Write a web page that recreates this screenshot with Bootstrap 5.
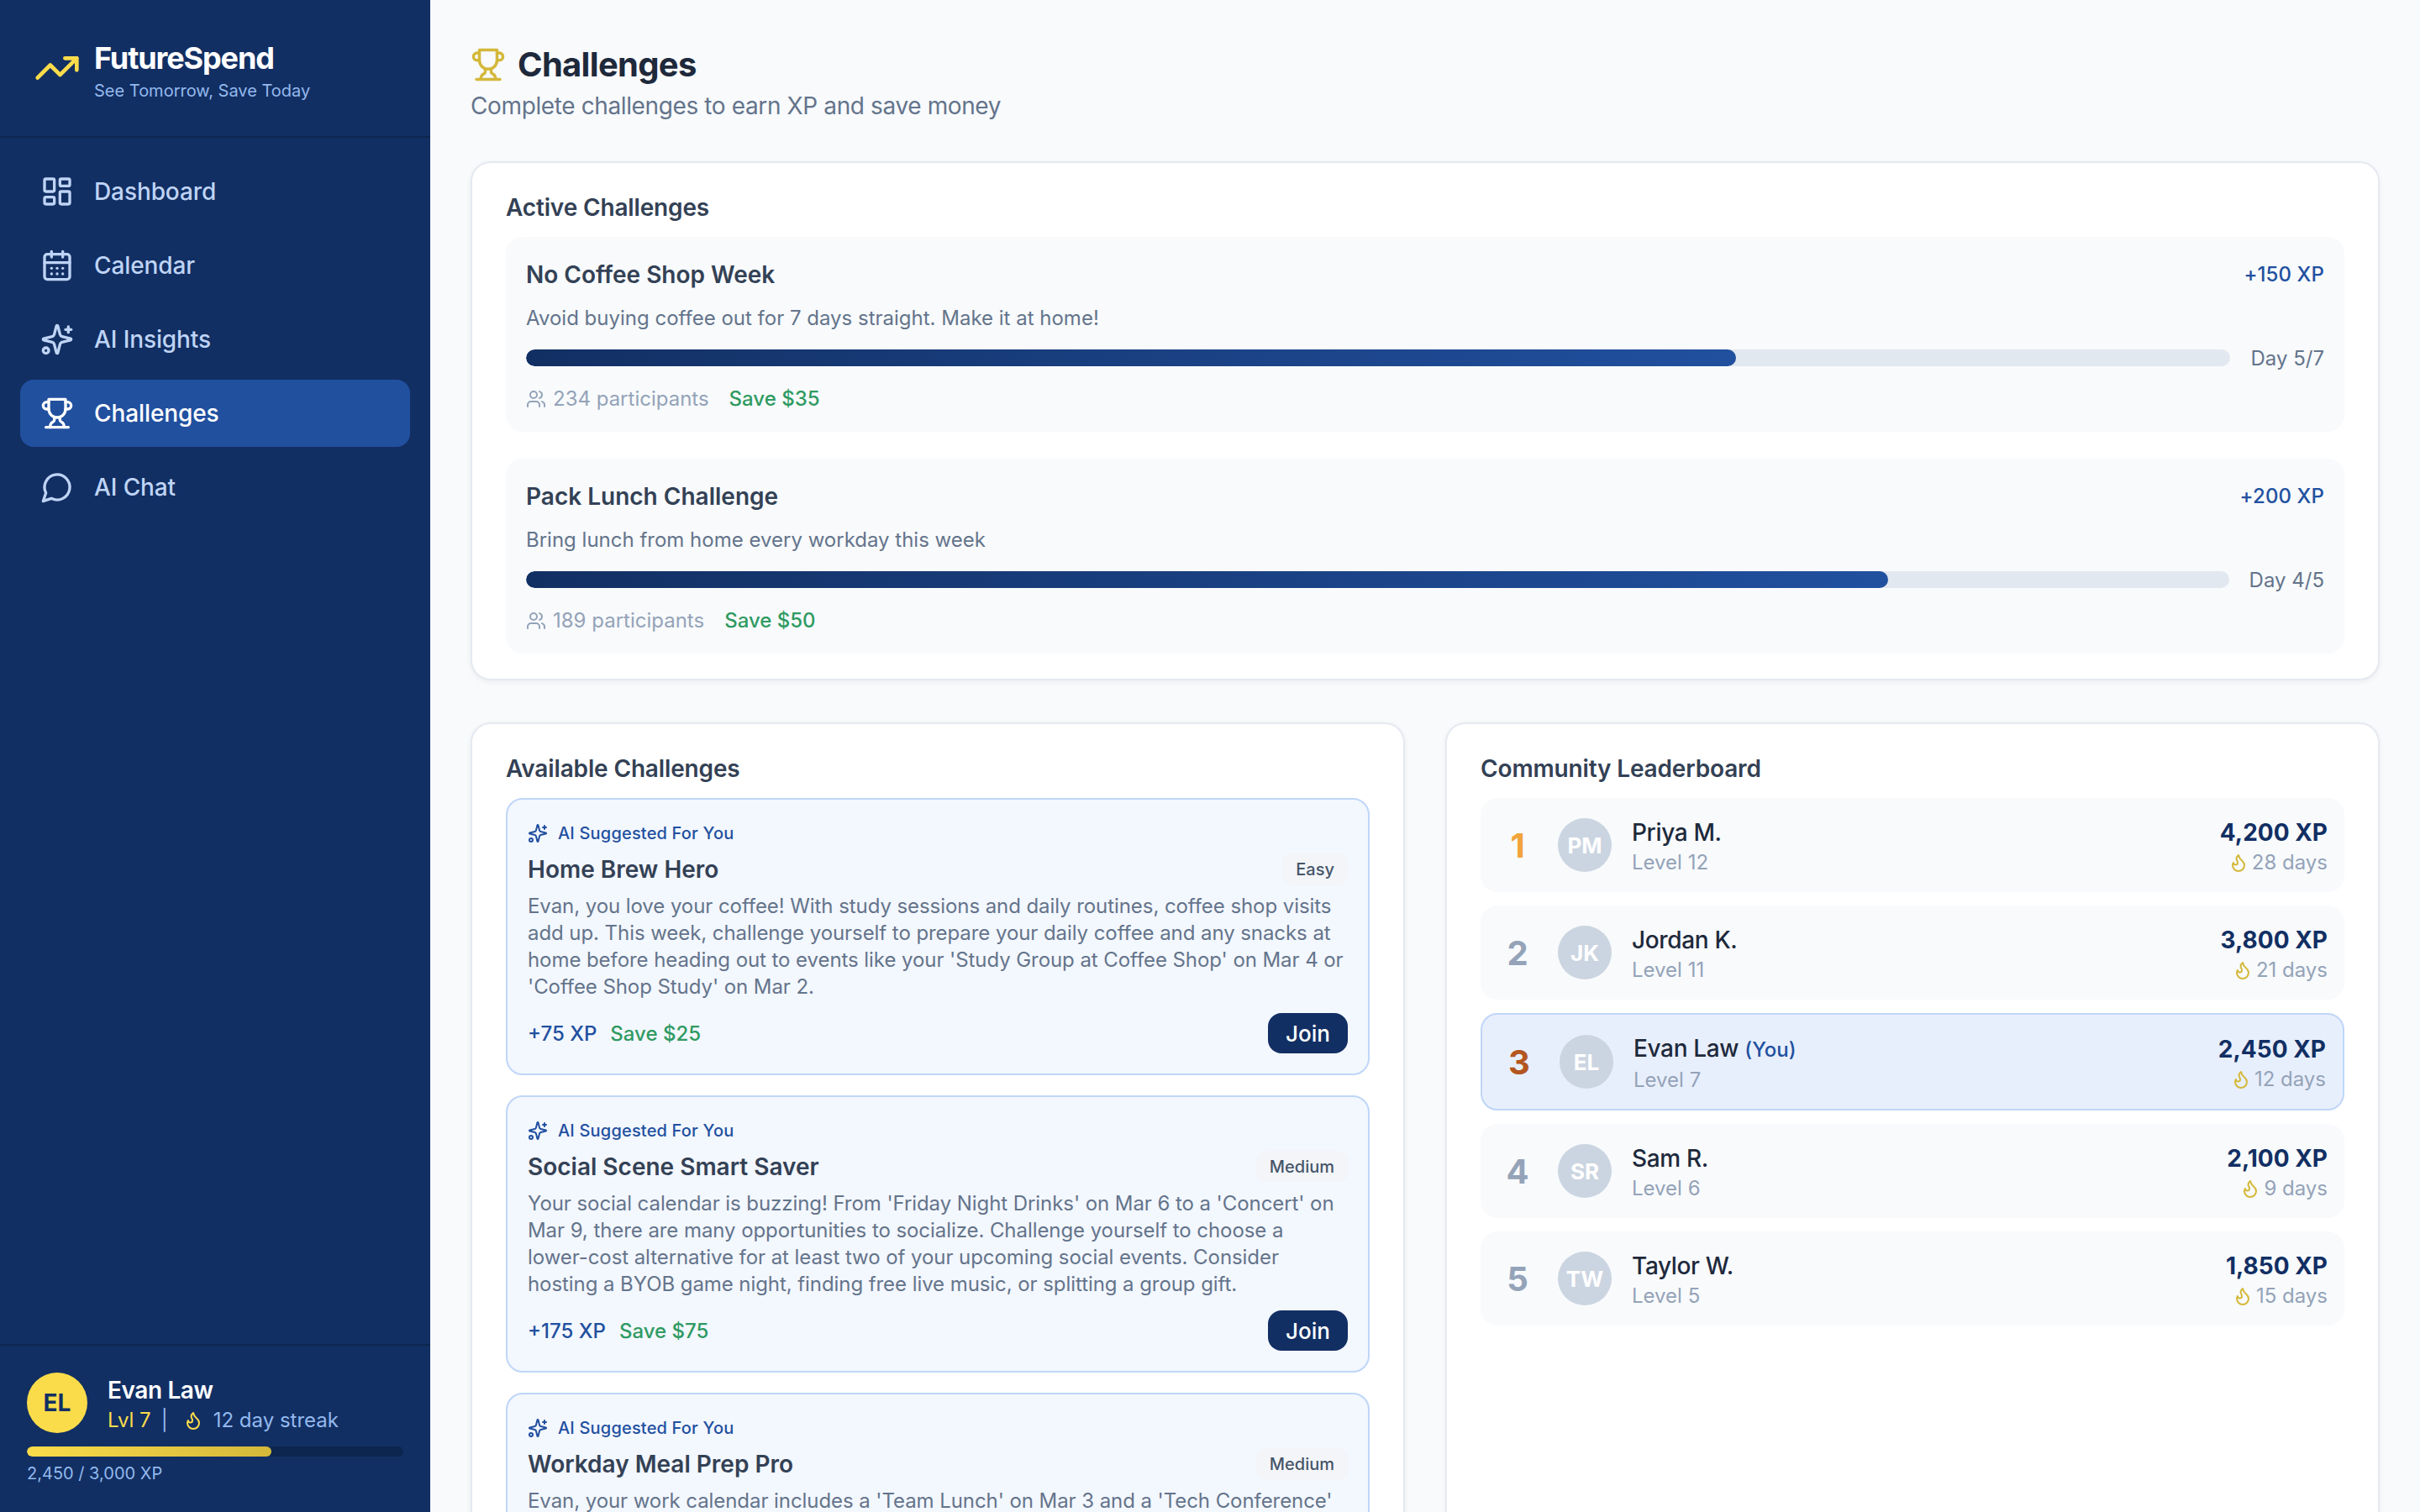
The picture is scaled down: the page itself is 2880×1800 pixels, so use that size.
<!DOCTYPE html>
<html lang="en">
<head>
<meta charset="utf-8">
<title>FutureSpend – Challenges</title>
<link rel="stylesheet" href="https://cdn.jsdelivr.net/npm/bootstrap@5.3.0/dist/css/bootstrap.min.css">
<style>
html,body{height:100%;}
body{font-family:Inter,"Liberation Sans",sans-serif;background:#f8fafc;color:#1e293b;overflow:hidden;}
.fs-app{height:1800px;}
svg.ic{fill:none;stroke:currentColor;stroke-width:2;stroke-linecap:round;stroke-linejoin:round;flex:none;display:block;}
.fs-side{width:512px;flex:none;background:#122f63;color:#bfd4f5;}
.fs-head{height:164px;border-bottom:2px solid #0e274f;padding:0 40px;gap:16px;}
.fs-logo{width:56px;height:56px;color:#fadc4b;}
.fs-headtxt{padding-top:9px;}
.fs-brand{font-size:36px;line-height:40px;font-weight:700;color:#fff;letter-spacing:-1.1px;}
.fs-tag{font-size:20px;line-height:28px;color:#93b9ee;margin-top:5px;}
.fs-nav{padding:24px;gap:8px;}
.fs-nav .nav-link{height:80px;padding:0 24px;gap:24px;border-radius:16px;color:#bfd4f5;font-size:28px;font-weight:500;letter-spacing:-.1px;}
.fs-nav .nav-link.active{background:#21509f;color:#fff;}
.fs-nav svg{width:40px;height:40px;}
.fs-user{border-top:2px solid #0e274f;padding:32px;height:200px;}
.fs-av{width:72px;height:72px;border-radius:50%;background:#fadc4b;color:#122f63;font-size:28px;font-weight:700;flex:none;}
.fs-utxt{padding-top:2px;}
.fs-uname{font-size:28px;line-height:38px;font-weight:600;color:#fff;letter-spacing:-.4px;}
.fs-usub{font-size:24px;line-height:34px;color:#93b9ee;gap:16px;}
.fs-lvl{color:#fadc4b;margin-right:-4px;}
.fs-pipe{margin-right:2px;}
.fs-usub svg{width:24px;height:24px;color:#fadc4b;margin-right:-4px;}
.fs-xpbar{height:12px;border-radius:6px;background:#0c2650;margin-top:14px;}
.fs-xpfill{background:linear-gradient(90deg,#fadc4b,#d4b83a);border-radius:6px;}
.fs-xptxt{font-size:20px;line-height:28px;color:#93b9ee;margin-top:6px;}
.fs-main{padding:48px;min-width:0;}
.fs-title{font-size:40px;line-height:58px;font-weight:700;color:#1e293b;gap:14px;letter-spacing:-.7px;margin-bottom:0;}
.fs-title svg{width:42px;height:42px;color:#d4b83a;}
.fs-sub{font-size:28px;line-height:40px;color:#64748b;margin:0 0 46px;letter-spacing:-.38px;}
.fs-card{background:#fff;border:2px solid #e5e9f0;border-radius:24px;box-shadow:0 2px 6px rgba(15,23,42,.06);padding:32px 40px 30px;}
.fs-h{font-size:28px;height:40px;line-height:42px;font-weight:600;color:#334155;margin:0 0 16px;letter-spacing:-.15px;}
.fs-active{background:#f8fafc;border-radius:20px;padding:24px;margin-bottom:32px;}
.fs-active:last-child{margin-bottom:0;}
.fs-atitle{font-size:28px;height:40px;line-height:42px;font-weight:600;color:#334155;}
.fs-xp{font-size:24px;color:#21509f;font-weight:500;letter-spacing:.1px;padding-top:2px;}
.fs-desc{font-size:24px;line-height:32px;color:#64748b;margin:17px 0 -1px;}
.fs-pbar{height:20px;border-radius:10px;background:#e2e8f0;}
.fs-pfill{background:linear-gradient(90deg,#122f63,#21509f);border-radius:10px;}
.fs-day{font-size:24px;height:32px;line-height:34px;color:#64748b;}
.fs-barrow{gap:24px;margin-top:16px;}
.fs-meta{font-size:24px;height:31px;line-height:32px;color:#94a3b8;gap:24px;margin-top:17px;}
.fs-meta svg{width:24px;height:24px;}
.fs-save{color:#2f9a62;font-weight:500;}
.fs-pair{--bs-gutter-x:48px;margin-top:50px;}
.fs-sug{background:#f3f7fe;border:2px solid #bfd6f8;border-radius:20px;padding:24px;margin-bottom:24px;}
.fs-ailabel{font-size:20px;line-height:32px;font-weight:500;color:#21509f;gap:12px;letter-spacing:.18px;}
.fs-ailabel svg{width:24px;height:24px;}
.fs-srow{margin-top:8px;height:38px;}
.fs-stitle{font-size:28px;line-height:38px;font-weight:600;color:#334155;}
.fs-diff{font-size:20px;line-height:26px;padding:6px 16px;background:#f3f5f9;color:#475569;font-weight:500;border-radius:12px;}
.fs-sdesc{font-size:24px;line-height:32px;color:#64748b;margin:9px 0 15px;letter-spacing:-.07px;}
.fs-join{background:#122f63;color:#fff;border:0;font-size:26px;font-weight:500;height:48px;width:95px;padding:0;border-radius:16px;}
.fs-join:hover{background:#122f63;color:#fff;}
.fs-sxp{font-size:24px;color:#21509f;font-weight:500;padding-top:2px;}
.fs-lrow{background:#f8fafc;border-radius:20px;padding:0 20px;height:112px;margin-bottom:16px;gap:24px;}
.fs-lrow.me{background:#e8effc;border:2px solid #bfd6f8;height:116px;}
.fs-rank{width:48px;font-size:40px;font-weight:700;color:#94a3b8;text-align:center;flex:none;padding-top:2px;}
.fs-rank1{color:#f2a33a;}
.fs-rank3{color:#b4561f;}
.fs-lav{width:64px;height:64px;border-radius:50%;background:#cbd5e1;color:#fff;font-size:26px;font-weight:700;flex:none;}
.fs-ltxt{padding-top:4px;}
.fs-lname{font-size:28px;line-height:38px;font-weight:500;color:#1e293b;letter-spacing:-.35px;}
.fs-lname span{font-size:24px;color:#21509f;letter-spacing:0;}
.fs-llvl{font-size:24px;line-height:34px;color:#94a3b8;}
.fs-lxp{font-size:28px;line-height:38px;font-weight:700;color:#122f63;}
.fs-ldays{font-size:24px;line-height:34px;color:#94a3b8;gap:4px;}
.fs-ldays svg{width:24px;height:24px;color:#d4b83a;}
</style>
</head>
<body>
<svg width="0" height="0" class="position-absolute">
<defs>
<symbol id="i-trend" viewBox="0 0 24 24"><polyline points="22 7 13.5 15.5 8.5 10.5 2 17"/><polyline points="16 7 22 7 22 13"/></symbol>
<symbol id="i-dash" viewBox="0 0 24 24"><rect x="3" y="3" width="7" height="9" rx="1"/><rect x="14" y="3" width="7" height="5" rx="1"/><rect x="14" y="12" width="7" height="9" rx="1"/><rect x="3" y="16" width="7" height="5" rx="1"/></symbol>
<symbol id="i-cal" viewBox="0 0 24 24"><path d="M8 2v4"/><path d="M16 2v4"/><rect x="3" y="4" width="18" height="18" rx="2"/><path d="M3 10h18"/><path d="M8 14h.01"/><path d="M12 14h.01"/><path d="M16 14h.01"/><path d="M8 18h.01"/><path d="M12 18h.01"/><path d="M16 18h.01"/></symbol>
<symbol id="i-spark" viewBox="0 0 24 24"><path d="M9.937 15.5A2 2 0 0 0 8.5 14.063l-6.135-1.582a.5.5 0 0 1 0-.962L8.5 9.936A2 2 0 0 0 9.937 8.5l1.582-6.135a.5.5 0 0 1 .963 0L14.063 8.5A2 2 0 0 0 15.5 9.937l6.135 1.581a.5.5 0 0 1 0 .964L15.5 14.063a2 2 0 0 0-1.437 1.437l-1.582 6.135a.5.5 0 0 1-.963 0z"/><path d="M20 3v4"/><path d="M22 5h-4"/><circle cx="4" cy="20" r="2"/></symbol>
<symbol id="i-trophy" viewBox="0 0 24 24"><path d="M6 9H4.5a2.5 2.5 0 0 1 0-5H6"/><path d="M18 9h1.5a2.5 2.5 0 0 0 0-5H18"/><path d="M4 22h16"/><path d="M10 14.66V17c0 .55-.47.98-.97 1.21C7.85 18.75 7 20.24 7 22"/><path d="M14 14.66V17c0 .55.47.98.97 1.21C16.15 18.75 17 20.24 17 22"/><path d="M18 2H6v7a6 6 0 0 0 12 0V2Z"/></symbol>
<symbol id="i-chat" viewBox="0 0 24 24"><path d="M7.9 20A9 9 0 1 0 4 16.1L2 22Z"/></symbol>
<symbol id="i-flame" viewBox="0 0 24 24"><path d="M8.5 14.5A2.5 2.5 0 0 0 11 12c0-1.38-.5-2-1-3-1.072-2.143-.224-4.054 2-6 .5 2.5 2 4.9 4 6.5 2 1.6 3 3.5 3 5.5a7 7 0 1 1-14 0c0-1.153.433-2.294 1-3a2.5 2.5 0 0 0 2.5 2.5z"/></symbol>
<symbol id="i-users" viewBox="0 0 24 24"><path d="M16 21v-2a4 4 0 0 0-4-4H6a4 4 0 0 0-4 4v2"/><circle cx="9" cy="7" r="4"/><path d="M22 21v-2a4 4 0 0 0-3-3.87"/><path d="M16 3.13a4 4 0 0 1 0 7.75"/></symbol>
</defs>
</svg>
<div class="d-flex fs-app">
  <aside class="fs-side d-flex flex-column">
    <div class="fs-head d-flex align-items-center">
      <svg class="ic fs-logo"><use href="#i-trend"/></svg>
      <div class="fs-headtxt">
        <div class="fs-brand">FutureSpend</div>
        <div class="fs-tag">See Tomorrow, Save Today</div>
      </div>
    </div>
    <nav class="nav flex-column fs-nav flex-grow-1">
      <a class="nav-link d-flex align-items-center" href="#"><svg class="ic"><use href="#i-dash"/></svg>Dashboard</a>
      <a class="nav-link d-flex align-items-center" href="#"><svg class="ic"><use href="#i-cal"/></svg>Calendar</a>
      <a class="nav-link d-flex align-items-center" href="#"><svg class="ic"><use href="#i-spark"/></svg>AI Insights</a>
      <a class="nav-link active d-flex align-items-center" href="#"><svg class="ic"><use href="#i-trophy"/></svg>Challenges</a>
      <a class="nav-link d-flex align-items-center" href="#"><svg class="ic"><use href="#i-chat"/></svg>AI Chat</a>
    </nav>
    <div class="fs-user">
      <div class="d-flex align-items-start gap-4">
        <div class="fs-av d-flex align-items-center justify-content-center">EL</div>
        <div class="fs-utxt">
          <div class="fs-uname">Evan Law</div>
          <div class="fs-usub d-flex align-items-center"><span class="fs-lvl">Lvl 7</span><span class="fs-pipe">|</span><svg class="ic"><use href="#i-flame"/></svg><span>12 day streak</span></div>
        </div>
      </div>
      <div class="progress fs-xpbar"><div class="progress-bar fs-xpfill" style="width:65%"></div></div>
      <div class="fs-xptxt">2,450 / 3,000 XP</div>
    </div>
  </aside>
  <main class="fs-main flex-grow-1 overflow-hidden">
    <h1 class="fs-title d-flex align-items-center"><svg class="ic"><use href="#i-trophy"/></svg>Challenges</h1>
    <p class="fs-sub">Complete challenges to earn XP and save money</p>

    <section class="fs-card">
      <h2 class="fs-h">Active Challenges</h2>
      <div class="fs-active">
        <div class="d-flex justify-content-between align-items-center"><div class="fs-atitle">No Coffee Shop Week</div><div class="fs-xp">+150 XP</div></div>
        <p class="fs-desc">Avoid buying coffee out for 7 days straight. Make it at home!</p>
        <div class="d-flex align-items-center fs-barrow"><div class="progress fs-pbar flex-grow-1"><div class="progress-bar fs-pfill" style="width:71%"></div></div><div class="fs-day">Day 5/7</div></div>
        <div class="d-flex align-items-center fs-meta"><span class="d-flex align-items-center gap-2"><svg class="ic"><use href="#i-users"/></svg>234 participants</span><span class="fs-save">Save $35</span></div>
      </div>
      <div class="fs-active">
        <div class="d-flex justify-content-between align-items-center"><div class="fs-atitle">Pack Lunch Challenge</div><div class="fs-xp">+200 XP</div></div>
        <p class="fs-desc">Bring lunch from home every workday this week</p>
        <div class="d-flex align-items-center fs-barrow"><div class="progress fs-pbar flex-grow-1"><div class="progress-bar fs-pfill" style="width:80%"></div></div><div class="fs-day">Day 4/5</div></div>
        <div class="d-flex align-items-center fs-meta"><span class="d-flex align-items-center gap-2"><svg class="ic"><use href="#i-users"/></svg>189 participants</span><span class="fs-save">Save $50</span></div>
      </div>
    </section>

    <div class="row fs-pair">
      <div class="col-6">
        <section class="fs-card h-100">
          <h2 class="fs-h">Available Challenges</h2>
          <div class="fs-sug">
            <div class="fs-ailabel d-flex align-items-center"><svg class="ic"><use href="#i-spark"/></svg>AI Suggested For You</div>
            <div class="d-flex justify-content-between align-items-center fs-srow"><div class="fs-stitle">Home Brew Hero</div><span class="fs-diff">Easy</span></div>
            <p class="fs-sdesc">Evan, you love your coffee! With study sessions and daily routines, coffee shop visits add up. This week, challenge yourself to prepare your daily coffee and any snacks at home before heading out to events like your 'Study Group at Coffee Shop' on Mar 4 or 'Coffee Shop Study' on Mar 2.</p>
            <div class="d-flex justify-content-between align-items-center"><div class="d-flex gap-3 fs-sxp"><span>+75 XP</span><span class="fs-save">Save $25</span></div><button class="btn fs-join">Join</button></div>
          </div>
          <div class="fs-sug">
            <div class="fs-ailabel d-flex align-items-center"><svg class="ic"><use href="#i-spark"/></svg>AI Suggested For You</div>
            <div class="d-flex justify-content-between align-items-center fs-srow"><div class="fs-stitle">Social Scene Smart Saver</div><span class="fs-diff">Medium</span></div>
            <p class="fs-sdesc">Your social calendar is buzzing! From 'Friday Night Drinks' on Mar 6 to a 'Concert' on Mar 9, there are many opportunities to socialize. Challenge yourself to choose a lower-cost alternative for at least two of your upcoming social events. Consider hosting a BYOB game night, finding free live music, or splitting a group gift.</p>
            <div class="d-flex justify-content-between align-items-center"><div class="d-flex gap-3 fs-sxp"><span>+175 XP</span><span class="fs-save">Save $75</span></div><button class="btn fs-join">Join</button></div>
          </div>
          <div class="fs-sug">
            <div class="fs-ailabel d-flex align-items-center"><svg class="ic"><use href="#i-spark"/></svg>AI Suggested For You</div>
            <div class="d-flex justify-content-between align-items-center fs-srow"><div class="fs-stitle">Workday Meal Prep Pro</div><span class="fs-diff">Medium</span></div>
            <p class="fs-sdesc">Evan, your work calendar includes a 'Team Lunch' on Mar 3 and a 'Tech Conference'</p>
          </div>
        </section>
      </div>
      <div class="col-6">
        <section class="fs-card h-100">
          <h2 class="fs-h">Community Leaderboard</h2>
          <div class="fs-lrow d-flex align-items-center"><div class="fs-rank fs-rank1">1</div><div class="fs-lav d-flex align-items-center justify-content-center">PM</div><div class="flex-grow-1 fs-ltxt"><div class="fs-lname">Priya M.</div><div class="fs-llvl">Level 12</div></div><div class="text-end fs-ltxt"><div class="fs-lxp">4,200 XP</div><div class="fs-ldays d-flex align-items-center justify-content-end"><svg class="ic"><use href="#i-flame"/></svg>28 days</div></div></div>
          <div class="fs-lrow d-flex align-items-center"><div class="fs-rank">2</div><div class="fs-lav d-flex align-items-center justify-content-center">JK</div><div class="flex-grow-1 fs-ltxt"><div class="fs-lname">Jordan K.</div><div class="fs-llvl">Level 11</div></div><div class="text-end fs-ltxt"><div class="fs-lxp">3,800 XP</div><div class="fs-ldays d-flex align-items-center justify-content-end"><svg class="ic"><use href="#i-flame"/></svg>21 days</div></div></div>
          <div class="fs-lrow me d-flex align-items-center"><div class="fs-rank fs-rank3">3</div><div class="fs-lav d-flex align-items-center justify-content-center">EL</div><div class="flex-grow-1 fs-ltxt"><div class="fs-lname">Evan Law <span>(You)</span></div><div class="fs-llvl">Level 7</div></div><div class="text-end fs-ltxt"><div class="fs-lxp">2,450 XP</div><div class="fs-ldays d-flex align-items-center justify-content-end"><svg class="ic"><use href="#i-flame"/></svg>12 days</div></div></div>
          <div class="fs-lrow d-flex align-items-center"><div class="fs-rank">4</div><div class="fs-lav d-flex align-items-center justify-content-center">SR</div><div class="flex-grow-1 fs-ltxt"><div class="fs-lname">Sam R.</div><div class="fs-llvl">Level 6</div></div><div class="text-end fs-ltxt"><div class="fs-lxp">2,100 XP</div><div class="fs-ldays d-flex align-items-center justify-content-end"><svg class="ic"><use href="#i-flame"/></svg>9 days</div></div></div>
          <div class="fs-lrow d-flex align-items-center"><div class="fs-rank">5</div><div class="fs-lav d-flex align-items-center justify-content-center">TW</div><div class="flex-grow-1 fs-ltxt"><div class="fs-lname">Taylor W.</div><div class="fs-llvl">Level 5</div></div><div class="text-end fs-ltxt"><div class="fs-lxp">1,850 XP</div><div class="fs-ldays d-flex align-items-center justify-content-end"><svg class="ic"><use href="#i-flame"/></svg>15 days</div></div></div>
        </section>
      </div>
    </div>
  </main>
</div>
<script src="https://cdn.jsdelivr.net/npm/bootstrap@5.3.0/dist/js/bootstrap.bundle.min.js"></script>
</body>
</html>
